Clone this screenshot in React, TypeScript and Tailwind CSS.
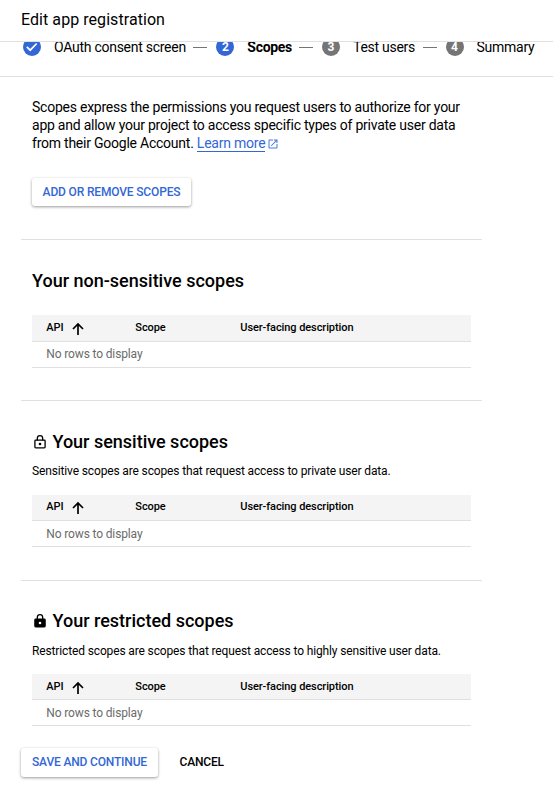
import React from 'react';

function Step({ label, mark, active, className = '' }: { label: string; mark: React.ReactNode; active?: boolean; className?: string }) {
  return (
    <div className={`flex shrink-0 items-center ${className}`}>
      {mark}
      <span className={`ml-[13px] whitespace-nowrap ${active ? 'font-bold tracking-[-0.3px]' : 'tracking-[-0.27px]'}`}>{label}</span>
    </div>
  );
}

function Bubble({ n, className }: { n: number; className: string }) {
  return <span className={`flex h-[18px] w-[18px] items-center justify-center rounded-full text-xs font-bold text-white ${className}`}>{n}</span>;
}

function Dash({ className }: { className: string }) {
  return <span className={`h-px w-[14px] shrink-0 bg-[#757575] ${className}`} />;
}

function Lock({ filled }: { filled?: boolean }) {
  return (
    <svg viewBox="0 0 16 16" className="mr-[4.500px] h-4 w-4" fill="none" stroke="currentColor" strokeWidth="1.300">
      <path d="M5.300 6.500V4.400a2.700 2.700 0 0 1 5.400 0v2.100" />
      <rect x="2.900" y="6.100" width="10.200" height="7.800" rx="0.800" fill={filled ? 'currentColor' : 'none'} />
      <circle cx="8" cy="10" r="1.300" stroke="none" fill={filled ? 'white' : 'currentColor'} />
    </svg>
  );
}

function ScopeTable({ headClass, rowClass = '' }: { headClass: string; rowClass?: string }) {
  return (
    <div className="w-[439px] text-[11px]">
      <div className={`flex items-center bg-[#f4f4f4] font-medium tracking-[-0.08px] ${headClass}`}>
        <div className="flex w-[103.300px] items-center pl-[14.300px]">
          API
          <svg viewBox="0 0 14 14" className="mt-px ml-[7.500px] h-[14px] w-[14px]" fill="none" stroke="currentColor" strokeWidth="1.700">
            <path d="M7 13V2M2 7l5-5 5 5" />
          </svg>
        </div>
        <div className="w-[105px]">Scope</div>
        <div>User-facing description</div>
      </div>
      <div className={`flex h-[27px] items-center border-y border-[#e0e0e0] pl-[14.300px] text-xs tracking-[-0.14px] text-[#6b6b6b] ${rowClass}`}>No rows to display</div>
    </div>
  );
}

export default function App() {
  return (
    <div className="h-[794px] w-[553px] overflow-hidden bg-white font-['Roboto',sans-serif] text-black">
      <header className="flex h-[42px] items-center border-b border-[#e0e0e0] pb-px pl-[21px] text-base tracking-[0.060px]">Edit app registration</header>
      <nav className="h-[35px] overflow-hidden border-b border-[#e0e0e0]">
        <div className="-mt-[5px] flex h-5 items-center pl-[23px] text-sm">
          <Step label="OAuth consent screen" mark={
            <svg viewBox="0 0 18 18" className="h-[18px] w-[18px]"><circle cx="9" cy="9" r="9" fill="#3367d6" /><path d="M3.800 8.800l3.400 3.400 6.500-6.700" fill="none" stroke="white" strokeWidth="1.700" /></svg>
          } />
          <Dash className="mr-[9.500px] ml-[7px]" />
          <Step label="Scopes" active mark={<Bubble n={2} className="bg-[#3367d6]" />} />
          <Dash className="mr-[9px] ml-[7px]" />
          <Step label="Test users" mark={<Bubble n={3} className="bg-[#757575]" />} />
          <Dash className="mr-[9px] ml-[7.500px]" />
          <Step label="Summary" mark={<Bubble n={4} className="bg-[#757575]" />} />
        </div>
      </nav>
      <main className="ml-[21px] w-[461px]">
        <section className="h-[163px] border-b border-[#e0e0e0] pt-[21px] pl-[11px]">
          <p className="text-sm leading-[18px] tracking-[-0.235px] whitespace-nowrap">
            Scopes express the permissions you request users to authorize for your<br />
            app and allow your project to access specific types of private user data<br />
            from their Google Account. <a className="border-b border-[#3367d6] text-[#3367d6]">Learn more</a>
            <svg viewBox="0 0 24 24" className="ml-[2px] inline h-3 w-3 text-[#4a78dc]" fill="currentColor"><path d="M19 19H5V5h7V3H5a2 2 0 00-2 2v14a2 2 0 002 2h14a2 2 0 002-2v-7h-2v7zM14 3v2h3.590l-9.830 9.830 1.410 1.410L19 6.410V10h2V3h-7z" /></svg>
          </p>
          <button className="mt-[26px] h-7 w-[159px] rounded-[3px] text-xs font-medium tracking-[-0.16px] text-[#3367d6] shadow-[0_1px_3px_rgba(0,0,0,0.4)]">ADD OR REMOVE SCOPES</button>
        </section>
        <section className="h-[161px] border-b border-[#e0e0e0] pt-[29px] pl-[11px]">
          <h2 className="mb-[22px] text-lg leading-6 font-medium">Your non-sensitive scopes</h2>
          <ScopeTable headClass="h-[26px]" rowClass="pb-[2px]" />
        </section>
        <section className="h-[180px] border-b border-[#e0e0e0] pt-[29px] pl-[11px]">
          <h2 className="flex items-center text-lg leading-6 font-medium tracking-[-0.01px]"><Lock />Your sensitive scopes</h2>
          <p className="mt-[9px] mb-[16px] text-xs leading-4 tracking-[-0.14px]">Sensitive scopes are scopes that request access to private user data.</p>
          <ScopeTable headClass="h-[25px]" />
        </section>
        <section className="h-[167px] pt-[28px] pl-[11px]">
          <h2 className="flex items-center text-lg leading-6 font-medium"><Lock filled />Your restricted scopes</h2>
          <p className="mt-[10px] mb-[15px] text-xs leading-4 tracking-[-0.136px]">Restricted scopes are scopes that request access to highly sensitive user data.</p>
          <ScopeTable headClass="h-[25px] pt-px" />
        </section>
        <div className="flex items-center text-xs font-medium tracking-[-0.17px]">
          <button className="h-[29px] w-[137px] rounded-[3px] pb-px text-[#3367d6] shadow-[0_1px_3px_rgba(0,0,0,0.4)]">SAVE AND CONTINUE</button>
          <button className="ml-[21.500px] pb-px">CANCEL</button>
        </div>
      </main>
    </div>
  );
}
